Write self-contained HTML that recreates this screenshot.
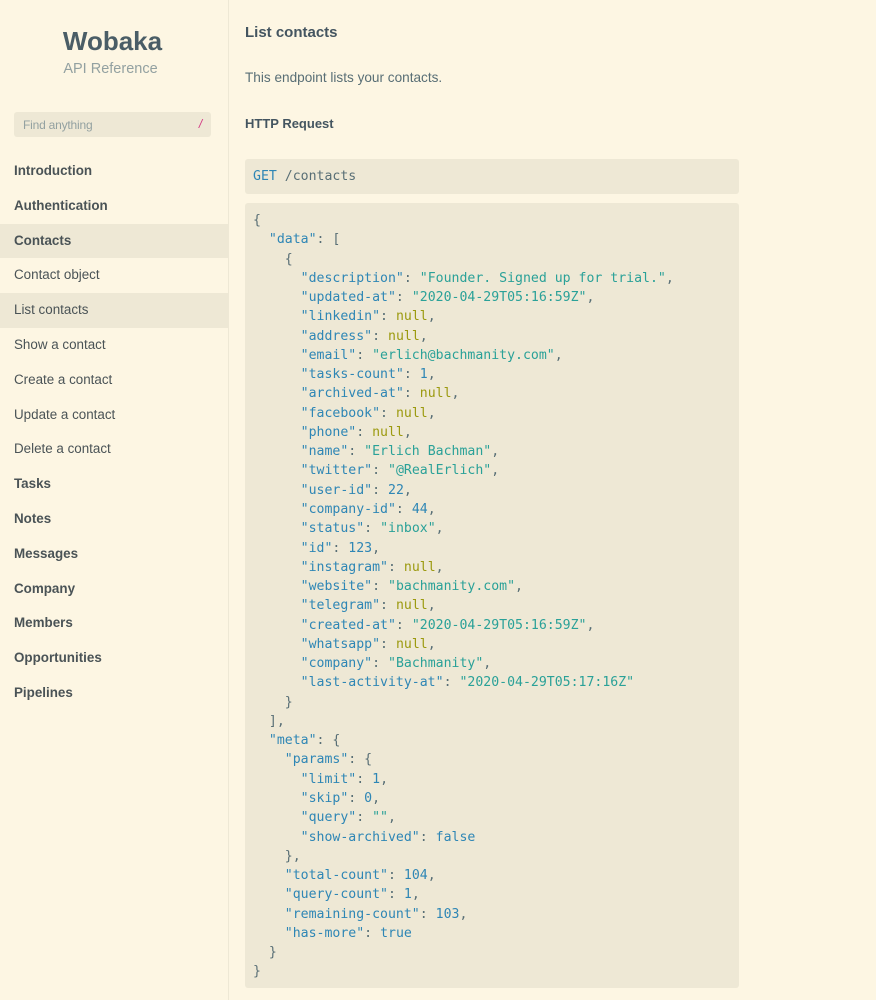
<!DOCTYPE html>
<html><head><meta charset="utf-8"><style>
*{margin:0;padding:0;box-sizing:border-box}
body{width:876px;height:1000px;overflow:hidden;background:#fdf6e3;font-family:"Liberation Sans",sans-serif;color:#445;position:relative}
.side{position:absolute;left:0;top:0;width:229px;height:1000px;border-right:1px solid #eee8d5;background:#fdf6e3}
.logo{position:absolute;top:26px;left:0;width:225px;text-align:center;font-size:26px;font-weight:bold;color:#4a5d66}
.sub{position:absolute;top:61px;left:0;width:221px;text-align:center;font-size:14.5px;color:#93a1a1}
.search{position:absolute;left:14px;top:112px;width:197px;height:25px;background:#eee8d5;border-radius:3px;font-size:12px;color:#93a1a1;padding:6px 9px;letter-spacing:-.2px}
.search span{position:absolute;right:9px;top:5px;color:#d33682;font-style:italic}
.nav{position:absolute;top:154px;left:0;width:228px}
.nav div{height:34.8px;line-height:34.8px;padding-left:14px;font-size:13.4px;color:#4a5356}
.nav .b{font-weight:bold}
.nav .a{background:#eee8d5}
.main{position:absolute;left:245px;top:0}
h1{position:absolute;top:24px;left:0;font-size:15px;white-space:nowrap;color:#445560}
.p{position:absolute;top:70px;left:0;font-size:13.6px;white-space:nowrap;color:#586e75}
h2{position:absolute;top:116px;left:0;font-size:13px;white-space:nowrap;color:#445560}
.get{position:absolute;top:159px;left:0;width:494px;height:35px;background:#eee8d5;border-radius:3px;font:13.2px "DejaVu Sans Mono",monospace;padding:10px 8px;color:#586e75;white-space:pre}
pre{position:absolute;top:203px;left:0;width:494px;height:785px;background:#eee8d5;border-radius:3px;font:13.2px/19.26px "DejaVu Sans Mono",monospace;padding:8px 8px;color:#586e75}
.k{color:#2e86b5}.s{color:#2aa198}.n{color:#9c9a10}.m{color:#2e86b5}
</style></head><body>
<div class="side">
<div class="logo">Wobaka</div>
<div class="sub">API Reference</div>
<div class="search">Find anything<span>/</span></div>
<div class="nav">
<div class="b">Introduction</div>
<div class="b">Authentication</div>
<div class="b a">Contacts</div>
<div>Contact object</div>
<div class="a">List contacts</div>
<div>Show a contact</div>
<div>Create a contact</div>
<div>Update a contact</div>
<div>Delete a contact</div>
<div class="b">Tasks</div>
<div class="b">Notes</div>
<div class="b">Messages</div>
<div class="b">Company</div>
<div class="b">Members</div>
<div class="b">Opportunities</div>
<div class="b">Pipelines</div>
</div></div>
<div class="main">
<h1>List contacts</h1>
<div class="p">This endpoint lists your contacts.</div>
<h2>HTTP Request</h2>
<div class="get"><span class="k">GET</span> /contacts</div>
<pre>{
  <span class="k">"data"</span>: [
    {
      <span class="k">"description"</span>: <span class="s">"Founder. Signed up for trial."</span>,
      <span class="k">"updated-at"</span>: <span class="s">"2020-04-29T05:16:59Z"</span>,
      <span class="k">"linkedin"</span>: <span class="n">null</span>,
      <span class="k">"address"</span>: <span class="n">null</span>,
      <span class="k">"email"</span>: <span class="s">"erlich@bachmanity.com"</span>,
      <span class="k">"tasks-count"</span>: <span class="m">1</span>,
      <span class="k">"archived-at"</span>: <span class="n">null</span>,
      <span class="k">"facebook"</span>: <span class="n">null</span>,
      <span class="k">"phone"</span>: <span class="n">null</span>,
      <span class="k">"name"</span>: <span class="s">"Erlich Bachman"</span>,
      <span class="k">"twitter"</span>: <span class="s">"@RealErlich"</span>,
      <span class="k">"user-id"</span>: <span class="m">22</span>,
      <span class="k">"company-id"</span>: <span class="m">44</span>,
      <span class="k">"status"</span>: <span class="s">"inbox"</span>,
      <span class="k">"id"</span>: <span class="m">123</span>,
      <span class="k">"instagram"</span>: <span class="n">null</span>,
      <span class="k">"website"</span>: <span class="s">"bachmanity.com"</span>,
      <span class="k">"telegram"</span>: <span class="n">null</span>,
      <span class="k">"created-at"</span>: <span class="s">"2020-04-29T05:16:59Z"</span>,
      <span class="k">"whatsapp"</span>: <span class="n">null</span>,
      <span class="k">"company"</span>: <span class="s">"Bachmanity"</span>,
      <span class="k">"last-activity-at"</span>: <span class="s">"2020-04-29T05:17:16Z"</span>
    }
  ],
  <span class="k">"meta"</span>: {
    <span class="k">"params"</span>: {
      <span class="k">"limit"</span>: <span class="m">1</span>,
      <span class="k">"skip"</span>: <span class="m">0</span>,
      <span class="k">"query"</span>: <span class="s">""</span>,
      <span class="k">"show-archived"</span>: <span class="m">false</span>
    },
    <span class="k">"total-count"</span>: <span class="m">104</span>,
    <span class="k">"query-count"</span>: <span class="m">1</span>,
    <span class="k">"remaining-count"</span>: <span class="m">103</span>,
    <span class="k">"has-more"</span>: <span class="m">true</span>
  }
}</pre>
</div>
</body></html>
